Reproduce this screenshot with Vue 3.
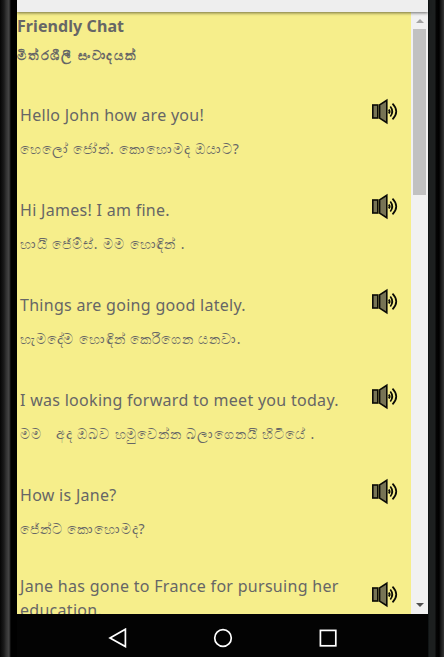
<template>
  <div class="device">
    <div class="bezel bezel-left"></div>
    <div class="screen">
      <div class="app-bar"></div>
      <div class="viewport">
        <main class="page">
          <h1 class="title">Friendly Chat</h1>
          <h2 class="subtitle">මිත්රශීලී සංවාදයක්</h2>
          <div class="phrases">
            <div
              v-for="(phrase, index) in phrases"
              :key="index"
              class="phrase"
              :class="{ 'phrase-long': phrase.long }"
            >
              <div class="phrase-text">
                <p class="english">{{ phrase.english }}</p>
                <p class="sinhala">{{ phrase.sinhala }}</p>
              </div>
              <svg class="speaker" viewBox="0 -0.5 28 28" @click="speak(phrase.english)">
                <rect x="1.8" y="7.5" width="5" height="13" fill="#777455" stroke="#0b0b06" stroke-width="1.6" />
                <path d="M8.6 7.4 L15.8 2.8 V25.2 L8.6 20.6 Z" fill="#777455" stroke="#0b0b06" stroke-width="1.6" />
                <path d="M17.8 12 Q19.4 14 17.8 16" fill="none" stroke="#0b0b06" stroke-width="1.9" />
                <path d="M19.3 9 Q23.3 14 19.3 19" fill="none" stroke="#0b0b06" stroke-width="1.7" />
                <path d="M21.5 6.2 Q29 14 21.5 21.8" fill="none" stroke="#0b0b06" stroke-width="1.7" />
              </svg>
            </div>
          </div>
        </main>
        <div class="scrollbar">
          <span class="arrow arrow-up"></span>
          <span class="thumb"></span>
          <span class="arrow arrow-down"></span>
        </div>
      </div>
      <nav class="nav-bar">
        <svg viewBox="0 0 20 20"><path d="M17.4 1.2 V18.6 L2 9.9 Z" /></svg>
        <svg viewBox="0 0 20 20"><circle cx="10" cy="10" r="8.3" /></svg>
        <svg viewBox="0 0 20 20"><rect x="2.4" y="2.4" width="15.4" height="15.4" /></svg>
      </nav>
    </div>
    <div class="bezel bezel-right"></div>
  </div>
</template>

<script setup>
import { ref } from 'vue'

const phrases = ref([
  { english: 'Hello John how are you!', sinhala: 'හෙලෝ ජෝන්. කොහොමද ඔයාට?' },
  { english: 'Hi James! I am fine.', sinhala: 'හායි ජේම්ස්. මම හොඳින් .' },
  { english: 'Things are going good lately.', sinhala: 'හැමදේම හොඳින් කෙරීගෙන යනවා.' },
  { english: 'I was looking forward to meet you today.', sinhala: 'මම   අද ඔබව හමුවෙන්න බලාගෙනයි හිටියේ .' },
  { english: 'How is Jane?', sinhala: 'ජේන්ට කොහොමද?' },
  { english: 'Jane has gone to France for pursuing her education.', sinhala: '', long: true }
])

const speak = (text) => {
  window.speechSynthesis?.speak(new SpeechSynthesisUtterance(text))
}
</script>

<style>
body {
  margin: 0;
  background: #000;
}
</style>

<style scoped>
.device {
  display: flex;
  width: 444px;
  height: 657px;
  overflow: hidden;
  background: #000;
}

.bezel-left {
  width: 17px;
  background: linear-gradient(to right, #050505 0, #1b1b1b 4px, #303030 6px, #464646 9px, #202020 10px, #000 11px);
}

.bezel-right {
  width: 16px;
  background: linear-gradient(to right, #050b0c 0, #1c1f1f 1px, #1c1f1f 7px, #050505 8px, #000 11px, #181818 13px, #353535 16px);
}

.screen {
  display: flex;
  flex-direction: column;
  width: 411px;
}

.app-bar {
  flex: none;
  position: relative;
  z-index: 1;
  height: 12px;
  background: #eee;
  box-shadow: 0 1px 3px rgba(0, 0, 0, 0.55);
}

.viewport {
  display: flex;
  height: 602px;
  overflow: hidden;
}

.page {
  width: 394px;
  background: #f6ee8b;
  color: #666;
  font-family: "Noto Sans", "Open Sans", sans-serif;
}

.title {
  margin: 0;
  padding-top: 2px;
  font-size: 16px;
  font-weight: 700;
  letter-spacing: 0.08px;
  line-height: 24px;
}

.subtitle {
  margin: 0;
  padding: 5px 0 1px;
  font-size: 13px;
  font-weight: 700;
  letter-spacing: 1.75px;
  line-height: 24px;
}

.phrase {
  display: flex;
  justify-content: space-between;
  box-sizing: border-box;
  height: 95px;
  padding: 35px 12px 0 3px;
}

.phrase-text {
  width: 335px;
}

.english,
.sinhala {
  margin: 0;
  line-height: 24px;
}

.english {
  font-size: 16px;
  letter-spacing: 0.29px;
}

.sinhala {
  padding-top: 10px;
  font-size: 14px;
  letter-spacing: 0.82px;
  word-spacing: 0.3px;
  white-space: pre;
}

.phrase-long {
  padding-top: 31px;
}

.speaker {
  width: 28px;
  height: 28px;
  margin-top: -6px;
}

.phrase-long .speaker {
  margin-top: 6px;
}

.scrollbar {
  display: flex;
  flex-direction: column;
  align-items: center;
  width: 17px;
  background: #f1f1f1;
}

.arrow {
  border: 4px solid transparent;
}

.arrow-up {
  margin-top: 3px;
  border-bottom-color: #a3a3a3;
}

.thumb {
  width: 13px;
  height: 166px;
  margin-top: 6px;
  background: #c1c1c1;
}

.arrow-down {
  margin: auto 0 7px;
  border-top-color: #505050;
  border-bottom-width: 0;
}

.nav-bar {
  display: flex;
  flex: 1;
  align-items: center;
  justify-content: center;
  gap: 85px;
  padding-top: 5px;
  background: #030303;
}

.nav-bar svg {
  width: 20px;
  height: 20px;
  fill: none;
  stroke: #fff;
  stroke-width: 1.7;
}
</style>
